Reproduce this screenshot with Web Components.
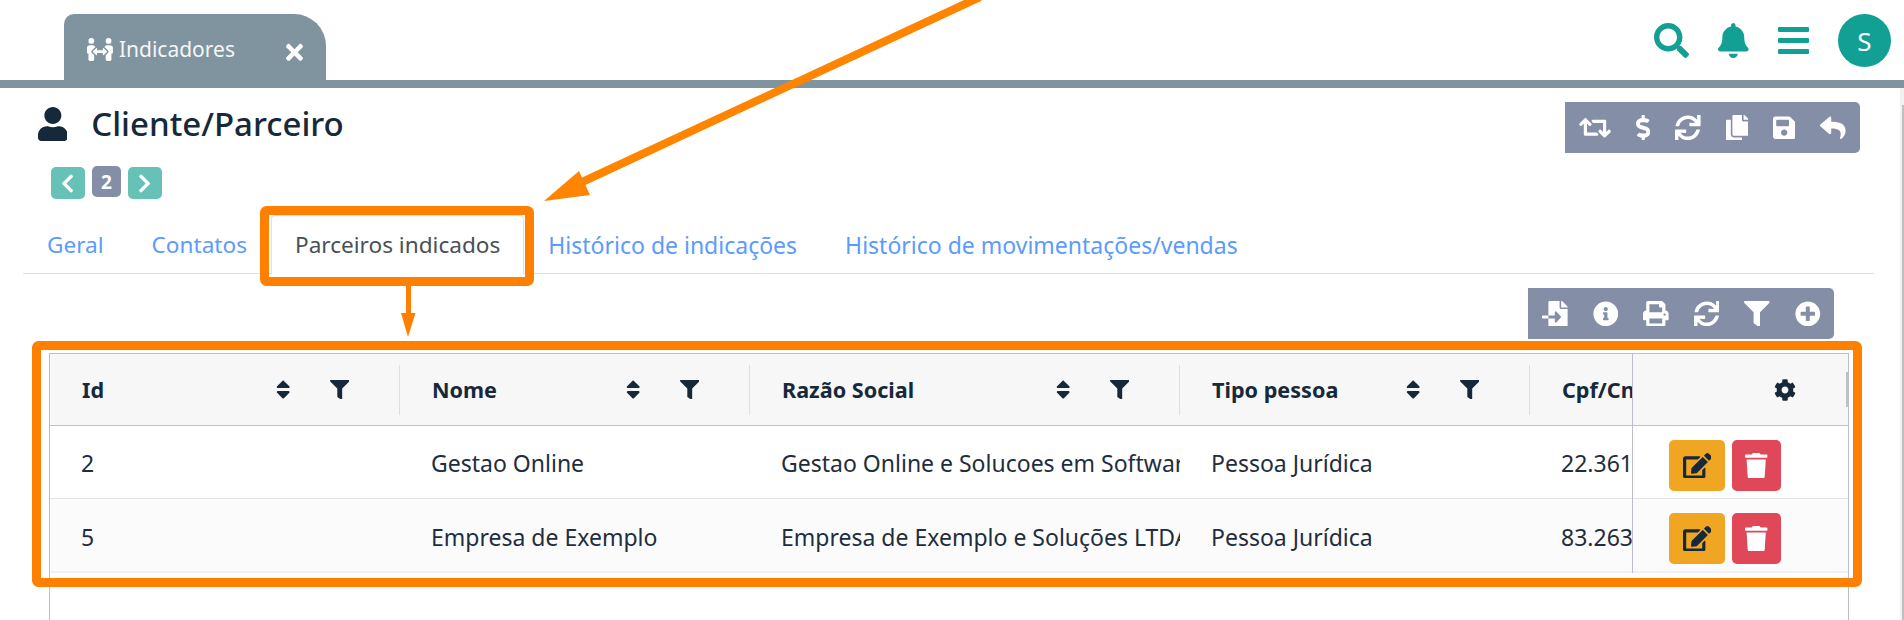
<!DOCTYPE html>
<html lang="pt-BR">
<head>
<meta charset="utf-8">
<title>Cliente/Parceiro</title>
<style>
html,body{margin:0;padding:0;background:#fff;overflow:hidden}
body{font-family:"Noto Sans","Open Sans",sans-serif;color:#16293a}
</style>
</head>
<body>
<app-shell>
  <top-bar>
    <ui-tab slot="tab" label="Indicadores"></ui-tab>
    <ui-icon slot="actions" name="search" size="35" color="#12a094"></ui-icon>
    <ui-icon slot="actions" name="bell" size="35" color="#12a094"></ui-icon>
    <menu-bars slot="actions"></menu-bars>
    <user-avatar slot="actions">S</user-avatar>
  </top-bar>
  <page-body>
    <page-head title-text="Cliente/Parceiro">
      <ui-icon slot="icon" name="user" size="34" color="#16293a"></ui-icon>
      <tool-bar slot="tools" style="padding-right:14px">
        <ui-icon name="retweet" size="25.6"></ui-icon>
        <ui-icon name="dollar" size="25.6"></ui-icon>
        <ui-icon name="sync" size="25.6"></ui-icon>
        <ui-icon name="copy" size="25.6"></ui-icon>
        <ui-icon name="save" size="25.6"></ui-icon>
        <ui-icon name="reply" size="25.6"></ui-icon>
      </tool-bar>
    </page-head>
    <page-pager value="2"></page-pager>
    <tab-strip>
      <tab-link>Geral</tab-link>
      <tab-link>Contatos</tab-link>
      <tab-link active>Parceiros indicados</tab-link>
      <tab-link wide>Histórico de indicações</tab-link>
      <tab-link wide>Histórico de movimentações/vendas</tab-link>
    </tab-strip>
    <grid-tools>
      <tool-bar>
        <ui-icon name="fileimport" size="25.6"></ui-icon>
        <ui-icon name="info" size="25.6"></ui-icon>
        <ui-icon name="print" size="25.6"></ui-icon>
        <ui-icon name="sync" size="25.6"></ui-icon>
        <ui-icon name="filter" size="25.6"></ui-icon>
        <ui-icon name="plus" size="25.6"></ui-icon>
      </tool-bar>
    </grid-tools>
    <data-table></data-table>
  </page-body>
  <annotation-layer></annotation-layer>
</app-shell>
<script>
const P={
user:[448,"M224 256c70.7 0 128-57.3 128-128S294.7 0 224 0 96 57.3 96 128s57.3 128 128 128zm89.6 32h-16.7c-22.2 10.2-46.9 16-72.9 16s-50.6-5.8-72.9-16h-16.7C60.2 288 0 348.2 0 422.4V464c0 26.5 21.5 48 48 48h352c26.5 0 48-21.5 48-48v-41.6c0-74.2-60.2-134.4-134.4-134.4z"],
search:[512,"M505 442.7L405.3 343c-4.5-4.5-10.6-7-17-7H372c27.6-35.3 44-79.7 44-128C416 93.1 322.9 0 208 0S0 93.1 0 208s93.1 208 208 208c48.3 0 92.7-16.4 128-44v16.3c0 6.4 2.5 12.5 7 17l99.7 99.7c9.4 9.4 24.6 9.4 33.9 0l28.3-28.3c9.4-9.4 9.4-24.6.1-34zM208 336c-70.7 0-128-57.2-128-128 0-70.7 57.2-128 128-128 70.7 0 128 57.2 128 128 0 70.7-57.2 128-128 128z"],
bell:[448,"M224 512c35.32 0 63.97-28.65 63.97-64H160.03c0 35.35 28.65 64 63.97 64zm215.39-149.71c-19.32-20.76-55.47-51.99-55.47-154.29 0-77.7-54.48-139.9-127.94-155.16V32c0-17.67-14.32-32-31.98-32s-31.98 14.33-31.98 32v20.84C118.56 68.1 64.08 130.3 64.08 208c0 102.3-36.15 133.53-55.47 154.29-6 6.45-8.66 14.16-8.61 21.71.11 16.4 12.98 32 32.1 32h383.8c19.12 0 32-15.6 32.1-32 .05-7.55-2.61-15.27-8.61-21.71z"],
times:[352,"M242.72 256l100.07-100.07c12.28-12.28 12.28-32.19 0-44.48l-22.24-22.24c-12.28-12.28-32.19-12.28-44.48 0L176 189.28 75.93 89.21c-12.28-12.28-32.19-12.28-44.48 0L9.21 111.45c-12.28 12.28-12.28 32.19 0 44.48L109.28 256 9.21 356.07c-12.28 12.28-12.28 32.19 0 44.48l22.24 22.24c12.28 12.28 32.2 12.28 44.48 0L176 322.72l100.07 100.07c12.28 12.28 32.2 12.28 44.48 0l22.24-22.24c12.28-12.28 12.28-32.19 0-44.48L242.72 256z"],
left:[320,"M34.52 239.03L228.87 44.69c9.37-9.37 24.57-9.37 33.94 0l22.67 22.67c9.36 9.36 9.37 24.52.04 33.9L131.49 256l154.02 154.75c9.34 9.38 9.32 24.54-.04 33.9l-22.67 22.67c-9.37 9.37-24.57 9.37-33.94 0L34.52 272.97c-9.37-9.37-9.37-24.57 0-33.94z"],
right:[320,"M285.476 272.971L91.132 467.314c-9.373 9.373-24.569 9.373-33.941 0l-22.667-22.667c-9.357-9.357-9.375-24.522-.04-33.901L188.505 256 34.484 101.255c-9.335-9.379-9.317-24.544.04-33.901l22.667-22.667c9.373-9.373 24.569-9.373 33.941 0L285.475 239.03c9.373 9.372 9.373 24.568.001 33.941z"],
retweet:[640,"M629.657 343.598L528.971 444.284c-9.373 9.372-24.568 9.372-33.941 0L394.343 343.598c-9.373-9.373-9.373-24.569 0-33.941l10.823-10.823c9.562-9.562 25.133-9.34 34.419.492L480 342.118V160H292.451a24.005 24.005 0 0 1-16.971-7.029l-16-16C244.361 121.851 255.069 96 276.451 96H520c13.255 0 24 10.745 24 24v222.118l40.416-42.792c9.285-9.831 24.856-10.054 34.419-.492l10.823 10.823c9.372 9.372 9.372 24.569-.001 33.941zm-265.138 15.431A23.999 23.999 0 0 0 347.548 352H160V169.881l40.416 42.792c9.286 9.831 24.856 10.054 34.419.491l10.822-10.822c9.373-9.373 9.373-24.569 0-33.941L144.971 67.716c-9.373-9.373-24.569-9.373-33.941 0L10.343 168.402c-9.373 9.373-9.373 24.569 0 33.941l10.822 10.822c9.562 9.562 25.133 9.34 34.419-.491L96 169.881V392c0 13.255 10.745 24 24 24h243.549c21.382 0 32.09-25.851 16.971-40.971l-16.001-16z"],
dollar:[288,"M209.2 233.4l-108-31.6C88.7 198.2 80 186.5 80 173.5c0-16.3 13.2-29.5 29.5-29.5h66.3c12.2 0 24.2 3.7 34.2 10.5 6.1 4.1 14.3 3.1 19.5-2l34.8-34c7.1-6.9 6.1-18.4-1.8-24.5C238 74.8 207.4 64.1 176 64V16c0-8.8-7.2-16-16-16h-32c-8.8 0-16 7.2-16 16v48h-2.5C45.8 64-5.4 118.7.5 183.6c4.2 46.1 39.4 83.6 83.8 96.6l102.5 30c12.5 3.7 21.2 15.3 21.2 28.3 0 16.3-13.2 29.5-29.5 29.5h-66.3C100 368 88 364.3 78 357.5c-6.1-4.1-14.3-3.1-19.5 2l-34.8 34c-7.1 6.9-6.1 18.4 1.8 24.5 24.5 19.2 55.1 29.9 86.5 30v48c0 8.8 7.2 16 16 16h32c8.8 0 16-7.2 16-16v-48.2c46.6-.9 90.3-28.6 105.7-72.7 21.5-61.6-14.6-124.8-72.5-141.7z"],
sync:[512,"M440.65 12.57l4 82.77A247.16 247.16 0 0 0 255.83 8C134.73 8 33.91 94.92 12.29 209.82A12 12 0 0 0 24.09 224h49.05a12 12 0 0 0 11.67-9.26 175.91 175.91 0 0 1 317-56.94l-101.46-4.86a12 12 0 0 0-12.57 12v47.41a12 12 0 0 0 12 12H500a12 12 0 0 0 12-12V12a12 12 0 0 0-12-12h-47.37a12 12 0 0 0-11.98 12.57zM255.83 432a175.61 175.61 0 0 1-146-77.8l101.8 4.87a12 12 0 0 0 12.57-12v-47.4a12 12 0 0 0-12-12H12a12 12 0 0 0-12 12V500a12 12 0 0 0 12 12h47.35a12 12 0 0 0 12-12.6l-4.15-82.57A247.17 247.17 0 0 0 255.83 504c121.11 0 221.93-86.92 243.55-201.82a12 12 0 0 0-11.8-14.18h-49.05a12 12 0 0 0-11.67 9.26A175.86 175.86 0 0 1 255.83 432z"],
copy:[448,"M320 448v40c0 13.255-10.745 24-24 24H24c-13.255 0-24-10.745-24-24V120c0-13.255 10.745-24 24-24h72v296c0 30.879 25.121 56 56 56h168zm0-344V0H152c-13.255 0-24 10.745-24 24v368c0 13.255 10.745 24 24 24h272c13.255 0 24-10.745 24-24V128H344c-13.2 0-24-10.8-24-24zm120.971-31.029L375.029 7.029A24 24 0 0 0 358.059 0H352v96h96v-6.059a24 24 0 0 0-7.029-16.97z"],
save:[448,"M433.941 129.941l-83.882-83.882A48 48 0 0 0 316.118 32H48C21.49 32 0 53.49 0 80v352c0 26.51 21.49 48 48 48h352c26.51 0 48-21.49 48-48V163.882a48 48 0 0 0-14.059-33.941zM224 416c-35.346 0-64-28.654-64-64 0-35.346 28.654-64 64-64s64 28.654 64 64c0 35.346-28.654 64-64 64zm96-304.52V212c0 6.627-5.373 12-12 12H76c-6.627 0-12-5.373-12-12V108c0-6.627 5.373-12 12-12h228.52c3.183 0 6.235 1.264 8.485 3.515l3.48 3.48A11.996 11.996 0 0 1 320 111.48z"],
reply:[512,"M8.309 189.836L184.313 37.851C199.719 24.546 224 35.347 224 56.015v80.053c160.629 1.839 288 34.032 288 186.258 0 61.441-39.581 122.309-83.333 154.132-13.653 9.931-33.111-2.533-28.077-18.631 45.344-145.012-21.507-183.51-176.59-185.742V360c0 20.7-24.3 31.453-39.687 18.164l-176.004-152c-11.071-9.562-11.086-26.753 0-36.328z"],
fileimport:[512,"M16 288c-8.8 0-16 7.2-16 16v32c0 8.8 7.2 16 16 16h112v-64zm489-183L407.1 7c-4.5-4.5-10.6-7-17-7H384v128h128v-6.1c0-6.3-2.5-12.4-7-16.9zm-153 31V0H152c-13.3 0-24 10.7-24 24v264h128v-65.2c0-14.3 17.3-21.4 27.4-11.3L379 308c6.6 6.7 6.6 17.4 0 24l-95.7 96.4c-10.1 10.1-27.4 3-27.4-11.3V352H128v136c0 13.3 10.7 24 24 24h336c13.3 0 24-10.7 24-24V160H376c-13.2 0-24-10.8-24-24z"],
info:[512,"M256 8C119.043 8 8 119.083 8 256c0 136.997 111.043 248 248 248s248-111.003 248-248C504 119.083 392.957 8 256 8zm0 110c23.196 0 42 18.804 42 42s-18.804 42-42 42-42-18.804-42-42 18.804-42 42-42zm56 254c0 6.627-5.373 12-12 12h-88c-6.627 0-12-5.373-12-12v-24c0-6.627 5.373-12 12-12h12v-64h-12c-6.627 0-12-5.373-12-12v-24c0-6.627 5.373-12 12-12h64c6.627 0 12 5.373 12 12v100h12c6.627 0 12 5.373 12 12v24z"],
print:[512,"M448 192V77.25c0-8.49-3.37-16.62-9.37-22.63L393.37 9.37c-6-6-14.14-9.37-22.63-9.37H96C78.33 0 64 14.33 64 32v160c-35.35 0-64 28.65-64 64v112c0 8.84 7.16 16 16 16h48v96c0 17.67 14.33 32 32 32h320c17.67 0 32-14.33 32-32v-96h48c8.84 0 16-7.16 16-16V256c0-35.35-28.65-64-64-64zm-64 256H128v-96h256v96zm0-224H128V64h192v48c0 8.84 7.16 16 16 16h48v96zm48 72c-13.25 0-24-10.75-24-24 0-13.26 10.75-24 24-24s24 10.74 24 24c0 13.25-10.75 24-24 24z"],
filter:[512,"M487.976 0H24.028C2.71 0-8.047 25.866 7.058 40.971L192 225.941V432c0 7.831 3.821 15.17 10.237 19.662l80 55.98C298.02 518.69 320 507.493 320 487.98V225.941l184.947-184.97C520.021 25.896 509.338 0 487.976 0z"],
plus:[512,"M256 8C119 8 8 119 8 256s111 248 248 248 248-111 248-248S393 8 256 8zm144 276c0 6.6-5.4 12-12 12h-92v92c0 6.6-5.4 12-12 12h-56c-6.6 0-12-5.4-12-12v-92h-92c-6.6 0-12-5.4-12-12v-56c0-6.6 5.4-12 12-12h92v-92c0-6.6 5.4-12 12-12h56c6.6 0 12 5.4 12 12v92h92c6.6 0 12 5.4 12 12v56z"],
cog:[512,"M487.4 315.7l-42.6-24.6c4.3-23.2 4.3-47 0-70.2l42.6-24.6c4.9-2.8 7.1-8.6 5.5-14-11.1-35.6-30-67.8-54.7-94.6-3.8-4.1-10-5.1-14.8-2.3L380.8 110c-17.9-15.4-38.5-27.3-60.8-35.1V25.8c0-5.6-3.9-10.5-9.4-11.7-36.7-8.2-74.3-7.8-109.2 0-5.5 1.2-9.4 6.1-9.4 11.7V75c-22.2 7.9-42.8 19.8-60.8 35.1L88.7 85.5c-4.9-2.8-11-1.9-14.8 2.3-24.7 26.7-43.6 58.9-54.7 94.6-1.7 5.4.6 11.2 5.5 14L67.3 221c-4.3 23.2-4.3 47 0 70.2l-42.6 24.6c-4.9 2.8-7.1 8.6-5.5 14 11.1 35.6 30 67.8 54.7 94.6 3.8 4.1 10 5.1 14.8 2.3l42.6-24.6c17.9 15.4 38.5 27.3 60.8 35.1v49.2c0 5.6 3.9 10.5 9.4 11.7 36.7 8.2 74.3 7.8 109.2 0 5.5-1.2 9.4-6.1 9.4-11.7v-49.2c22.2-7.9 42.8-19.8 60.8-35.1l42.6 24.6c4.9 2.8 11 1.9 14.8-2.3 24.7-26.7 43.6-58.9 54.7-94.6 1.5-5.5-.7-11.3-5.6-14.1zM256 336c-44.1 0-80-35.9-80-80s35.9-80 80-80 80 35.9 80 80-35.9 80-80 80z"],
edit:[576,"M402.6 83.2l90.2 90.2c3.8 3.8 3.8 10 0 13.8L274.4 405.6l-92.8 10.3c-12.4 1.4-22.9-9.1-21.5-21.5l10.3-92.8L388.8 83.2c3.8-3.8 10-3.8 13.8 0zm162-22.9l-48.8-48.8c-15.2-15.2-39.9-15.2-55.2 0l-35.4 35.4c-3.8 3.8-3.8 10 0 13.8l90.2 90.2c3.8 3.8 10 3.8 13.8 0l35.4-35.4c15.2-15.3 15.2-40 0-55.2zM384 346.2V448H64V128h229.8c3.2 0 6.2-1.3 8.5-3.5l40-40c7.6-7.6 2.2-20.5-8.5-20.5H48C21.5 64 0 85.5 0 112v352c0 26.5 21.5 48 48 48h352c26.5 0 48-21.5 48-48V306.2c0-10.7-12.9-16-20.5-8.5l-40 40c-2.2 2.3-3.5 5.3-3.5 8.5z"],
trash:[448,"M432 32H312l-9.4-18.7A24 24 0 0 0 281.1 0H166.8a23.72 23.72 0 0 0-21.4 13.3L136 32H16A16 16 0 0 0 0 48v32a16 16 0 0 0 16 16h416a16 16 0 0 0 16-16V48a16 16 0 0 0-16-16zM53.2 467a48 48 0 0 0 47.9 45h245.8a48 48 0 0 0 47.9-45L416 128H32z"],
sort:[320,"M41 288h238c21.4 0 32.1 25.9 17 41L177 448c-9.4 9.4-24.6 9.4-33.9 0L24 329c-15.1-15.1-4.4-41 17-41zm255-105L177 64c-9.4-9.4-24.6-9.4-33.9 0L24 183c-15.1 15.1-4.4 41 17 41h238c21.4 0 32.1-25.9 17-41z"],
people:[576,"M96,128A64,64,0,1,0,32,64,64,64,0,0,0,96,128Zm0,176.08a44.11,44.11,0,0,1,13.64-32L181.77,204c1.65-1.55,3.77-2.31,5.61-3.57A63.91,63.91,0,0,0,128,160H64A64,64,0,0,0,0,224V320a32,32,0,0,0,32,32V480a32,32,0,0,0,32,32h64a32,32,0,0,0,32-32V383.61l-50.36-47.53A44.08,44.08,0,0,1,96,304.08ZM480,128a64,64,0,1,0-64-64A64,64,0,0,0,480,128Zm32,32H448a63.91,63.91,0,0,0-59.38,40.42c1.84,1.27,4,2,5.62,3.59l72.12,68.06a44.37,44.37,0,0,1,0,64L416,383.62V480a32,32,0,0,0,32,32h64a32,32,0,0,0,32-32V352a32,32,0,0,0,32-32V224A64,64,0,0,0,512,160ZM444.4,295.34l-72.12-68.06A12,12,0,0,0,352,236v36H224V236a12,12,0,0,0-20.28-8.73L131.6,295.34a12.4,12.4,0,0,0,0,17.47l72.12,68.07A12,12,0,0,0,224,372.14V336H352v36.14a12,12,0,0,0,20.28,8.74l72.12-68.07A12.4,12.4,0,0,0,444.4,295.34Z"]
};
class UiIcon extends HTMLElement{
  connectedCallback(){
    if(this.shadowRoot)return;
    const [w,d]=P[this.getAttribute("name")];
    const s=parseFloat(this.getAttribute("size")||"16");
    const c=this.getAttribute("color")||"#fff";
    this.attachShadow({mode:"open"}).innerHTML=`<style>:host{display:inline-flex;flex:none;line-height:0}svg{display:block;fill:${c}}</style><svg width="${s*w/512}" height="${s}" viewBox="0 0 ${w} 512"><path d="${d}"/></svg>`;
  }
}
customElements.define("ui-icon",UiIcon);
class Base extends HTMLElement{
  constructor(){super();this.attachShadow({mode:"open"});}
  connectedCallback(){this.shadowRoot.innerHTML=this.render();}
}
const def=(n,f)=>customElements.define(n,class extends Base{render(){return f(this);}});
def("app-shell",()=>`<style>:host{display:flex;flex-direction:column;position:relative;width:1904px;height:620px;overflow:hidden;background:#fff}</style><slot></slot>`);
def("top-bar",()=>`<style>
:host{display:flex;flex:none;box-sizing:border-box;height:88px;border-bottom:8px solid #7f949e;padding:0 13px 0 64px;justify-content:space-between}
.t{display:flex;align-self:flex-end}
.a{display:flex;align-items:center;gap:29px;height:53px;margin-top:14px}
</style><div class="t"><slot name="tab"></slot></div><div class="a"><slot name="actions"></slot></div>`);
def("ui-tab",h=>`<style>
:host{display:flex;align-items:flex-start;box-sizing:border-box;width:262px;height:66px;padding:24px 23px 0;background:#7f949e;border-radius:10px 32px 0 0;color:#fff}
.l{margin-left:6px;font-size:21px;line-height:23px;color:#f4f6f7}
.x{margin-left:auto;margin-top:2px}
</style><ui-icon name="people" size="23"></ui-icon><span class="l">${h.getAttribute("label")}</span><ui-icon class="x" name="times" size="24.7"></ui-icon>`);
def("menu-bars",()=>`<style>:host{display:block;line-height:0}svg{display:block;fill:#12a094}</style><svg width="31" height="27" viewBox="0 0 31 27"><rect width="31" height="5" rx="1"/><rect y="11" width="31" height="5" rx="1"/><rect y="22" width="31" height="5" rx="1"/></svg>`);
def("user-avatar",()=>`<style>:host{display:flex;align-items:center;justify-content:center;width:53px;height:53px;border-radius:50%;background:#12a094;color:#fff;font-size:26px}</style><slot></slot>`);
def("page-body",()=>`<style>
:host{display:flex;flex:1;min-height:0}
.m{flex:1;min-width:0;display:flex;flex-direction:column;box-sizing:border-box;padding:0 26px 0 23px}
.s{flex:none;width:4px;box-sizing:border-box;background:#f1f1f1;padding:17px 0 0 2px;display:flex}
.s i{flex:1;background:#c1c1c1}
</style><div class="m"><slot></slot></div><div class="s"><i></i></div>`);
def("page-head",h=>`<style>
:host{display:flex;justify-content:space-between;align-items:flex-start;margin-top:14px;height:51px;padding:0 14px 0 14.5px}
.g{display:flex;align-items:center;height:34px;margin-top:5px;gap:24px}
h1{margin:0;font-size:33px;font-weight:500;line-height:34px;color:#16293a}
</style><div class="g"><slot name="icon"></slot><h1>${h.getAttribute("title-text")}</h1></div><slot name="tools"></slot>`);
def("tool-bar",()=>`<style>:host{display:flex;align-items:center;gap:25px;box-sizing:border-box;height:51px;padding:0 13.4px 0 14px;background:#848fa7;border-radius:0 5px 5px 0}</style><slot></slot>`);
def("page-pager",h=>`<style>
:host{display:flex;align-items:flex-start;gap:7px;margin:13px 0 0 28px;height:33px}
.b{display:flex;align-items:center;justify-content:center;width:34px;height:32px;margin-top:1px;background:#66c1b6;border-radius:5px}
.v{display:flex;align-items:center;justify-content:center;width:29px;height:31px;background:#848fa7;border-radius:5px;color:#fff;font-weight:700;font-size:19px}
</style><span class="b"><ui-icon name="left" size="21"></ui-icon></span><span class="v">${h.getAttribute("value")}</span><span class="b"><ui-icon name="right" size="21"></ui-icon></span>`);
def("tab-strip",()=>`<style>:host{display:flex;align-items:flex-end;margin-top:16px;height:59px;box-sizing:border-box;border-bottom:1px solid #dee2e6}</style><slot></slot>`);
def("tab-link",h=>`<style>
:host{display:flex;align-items:center;box-sizing:border-box;height:59px;margin-bottom:-1px;padding:0 23px;font-size:22.6px;white-space:nowrap;color:#5c9bfb;border:1px solid transparent;border-radius:4px 4px 0 0}
:host([wide]){font-size:23px}
:host([active]){color:#495057;border-color:#dee2e6 #dee2e6 #fff;background:#fff}
</style><slot></slot>`);
def("grid-tools",()=>`<style>:host{display:flex;justify-content:flex-end;margin:14px 40px 0 0}</style><slot></slot>`);
def("th-cell",h=>`<style>
:host{display:flex;align-items:center;box-sizing:border-box;height:71px;padding-left:32px;overflow:hidden}
b{flex:1;font-size:21.6px;font-weight:700;white-space:nowrap;color:#16293a}
.f{margin-left:39px}
.sep{flex:none;width:1px;height:50px;background:#dcdfe3;margin-left:50px}
</style><b>${h.getAttribute("label")}</b><ui-icon name="sort" size="23" color="#16293a"></ui-icon><ui-icon class="f" name="filter" size="19.5" color="#16293a"></ui-icon><i class="sep"></i>`);
def("td-cell",h=>`<style>:host{display:block;padding:${h.getAttribute("pt")}px 0 0 31px;overflow:hidden;white-space:nowrap;font-size:23px;line-height:68px;color:#1f2d3d}</style><slot></slot>`);
def("action-cell",()=>`<style>
:host{display:flex;gap:7px;box-sizing:border-box;height:100%;padding:14px 0 0 36px}
span{display:flex;align-items:center;justify-content:center;height:51px;border-radius:5px}
.e{width:56px;background:#f0a623}.d{width:49px;background:#e04759}
</style><span class="e"><ui-icon name="edit" size="25.6" color="#16293a"></ui-icon></span><span class="d"><ui-icon name="trash" size="25.6"></ui-icon></span>`);
const COLS='grid-template-columns:350px 350px 430px 350px 350px';
const rows=[["2","Gestao Online","Gestao Online e Solucoes em Software LTDA","Pessoa Jurídica","22.361.111/0001-00"],["5","Empresa de Exemplo","Empresa de Exemplo e Soluções LTDA","Pessoa Jurídica","83.263.111/0001-00"]];
def("data-table",()=>`<style>
:host{display:flex;align-items:flex-start;flex:1;margin:14px 25px 0 26px;border:solid #bcbec8;border-width:1px 1px 0}
.sc{width:1582px;flex:none;overflow:hidden}
.fz{flex:1;box-sizing:border-box;border-left:1px solid #bcbec8;min-width:0}
.r{display:grid;${COLS};height:73px;box-sizing:border-box;border-bottom:1px solid #e2e4ea}
.h{height:72px;background:#f7f7f8;border-bottom-color:#bfc1cc}
.alt{background:#fbfbfc}
.last{height:74px;border-bottom:2px solid #eff1f3}
.fz .r{display:block}
.fz .fh{display:flex;align-items:center;justify-content:flex-end}
.gear{margin-right:50px}
.bar{width:2px;height:35px;background:#bcc2cc}
</style>
<div class="sc"><div class="r h">${["Id","Nome","Razão Social","Tipo pessoa","Cpf/Cnpj"].map(l=>`<th-cell label="${l}"></th-cell>`).join("")}</div>
${rows.map((r,i)=>`<div class="r ${i?'alt last':''}">${r.map(c=>`<td-cell pt="${i?4:3}">${c}</td-cell>`).join("")}</div>`).join("")}</div>
<div class="fz"><div class="r h fh"><ui-icon class="gear" name="cog" size="22" color="#16293a"></ui-icon><i class="bar"></i></div>
<div class="r"><action-cell></action-cell></div><div class="r alt last"><action-cell></action-cell></div></div>`);
def("annotation-layer",()=>`<style>:host{position:absolute;inset:0;pointer-events:none;display:block}svg{display:block}</style>
<svg width="1904" height="620" viewBox="0 0 1904 620" fill="none" stroke="#ff8000">
<rect x="264.5" y="210.5" width="265" height="71" rx="2" stroke-width="9"/>
<rect x="36.5" y="345.5" width="1821" height="237" rx="2" stroke-width="9"/>
<line x1="980" y1="-3" x2="580" y2="183" stroke="#ff8500" stroke-width="8"/>
<polygon points="544,201 579,171 590,195" fill="#ff8500" stroke="none"/>
<rect x="406" y="286" width="5" height="28" fill="#ff8000" stroke="none"/>
<polygon points="401,313 415.5,313 408,337" fill="#ff8000" stroke="none"/>
</svg>`);
</script>
</body>
</html>
